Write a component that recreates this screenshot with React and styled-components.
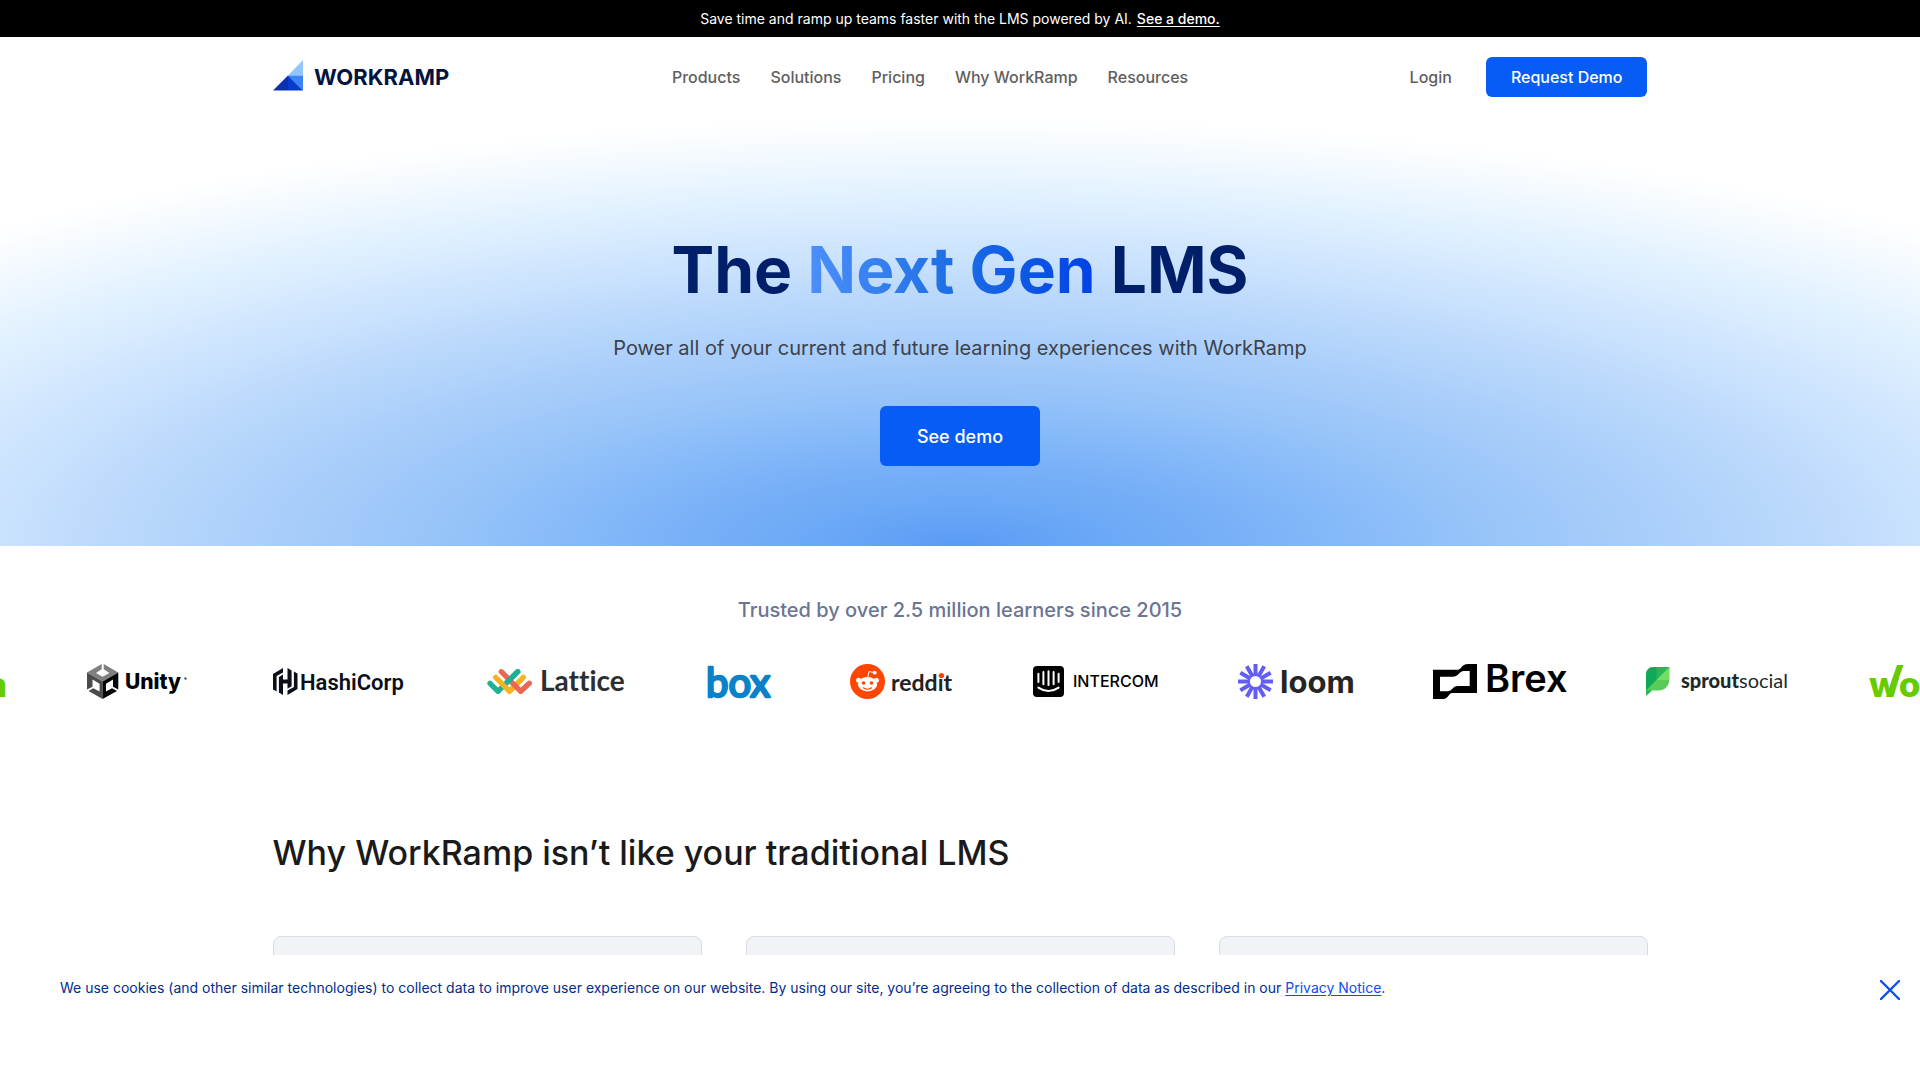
import React from "react";
import styled, { createGlobalStyle } from "styled-components";

const GlobalStyle = createGlobalStyle`
  *, *::before, *::after { box-sizing: border-box; }
  body {
    margin: 0;
    background: #fff;
    color: #1a1a1a;
    font-family: Inter, "Liberation Sans", sans-serif;
  }
  h1, h2, p { margin: 0; }
`;

const Announcement = styled.div`
  display: flex;
  justify-content: center;
  gap: 5px;
  padding: 8px 20px;
  background: #000;
  color: #fff;
  font-size: 14px;
  line-height: 21px;
`;

const AnnouncementLink = styled.a`
  color: #fff;
  font-weight: 500;
  text-underline-offset: 2px;
`;

const Container = styled.div`
  width: 100%;
  max-width: 1415px;
  margin: 0 auto;
  padding: 0 20px;
`;

const HeaderRow = styled(Container)`
  display: flex;
  align-items: center;
  justify-content: space-between;
  padding-top: 20px;
  padding-bottom: 20px;
`;

const HomeLink = styled.a`
  display: flex;
`;

const Nav = styled.nav`
  display: flex;
  gap: 30px;
`;

const NavLink = styled.a`
  color: #5e5e5e;
  font-size: 16px;
  font-weight: 500;
  line-height: 24px;
  text-decoration: none;
`;

const Actions = styled.div`
  display: flex;
  align-items: center;
  gap: 34px;
`;

const Button = styled.button`
  height: ${(p) => (p.$large ? 60 : 40)}px;
  padding: 0 ${(p) => (p.$large ? 37 : 25)}px;
  border: 0;
  border-radius: 6px;
  background: #075cf5;
  color: #fff;
  font-family: inherit;
  font-size: ${(p) => (p.$large ? 18 : 16)}px;
  font-weight: 500;
  cursor: pointer;
`;

const Hero = styled.section`
  display: flex;
  flex-direction: column;
  align-items: center;
  padding: 114px 20px 80px;
  background: radial-gradient(
    75% 100% at 50% 100%,
    #5a9bf5 0%,
    #6ba8f6 10%,
    #7ab1f8 20%,
    #93c2f9 34%,
    #aacefa 48%,
    #bddafc 60%,
    #c8e1fd 66%,
    #d0e6fe 71%,
    #daecff 77%,
    #e5f3ff 84%,
    #f5faff 93%,
    #fff 100%
  );
  text-align: center;
`;

const HeroTitle = styled.h1`
  color: #001f6b;
  font-size: 64px;
  font-weight: 700;
  line-height: 77px;
`;

const Accent = styled.span`
  background: linear-gradient(90deg, #4d8ffa 0%, #1d6fe5 50%, #0041e6 100%);
  background-clip: text;
  -webkit-background-clip: text;
  color: transparent;
`;

const HeroText = styled.p`
  margin: 25px 0 43px;
  color: #3b424c;
  font-size: 20px;
  line-height: 30px;
`;

const Trusted = styled.section`
  padding: 49px 0 40px;
  overflow: hidden;
`;

const TrustedTitle = styled.p`
  color: #6b7594;
  font-size: 20px;
  font-weight: 500;
  line-height: 30px;
  text-align: center;
`;

const LogoTrack = styled.div`
  display: flex;
  gap: 80px;
  width: max-content;
  margin-top: 39px;
  transform: translateX(-133px);
`;

const Logo = styled.svg`
  display: block;
  flex: none;
  overflow: visible;
`;

const PlainText = styled.text`
  font-variant-ligatures: none;
`;

const Why = styled(Container).attrs({ as: "section" })`
  padding-top: 88px;
`;

const WhyTitle = styled.h2`
  font-size: 34px;
  font-weight: 500;
  line-height: 50px;
`;

const CardGrid = styled.div`
  display: grid;
  grid-template-columns: repeat(3, 1fr);
  gap: 44px;
  margin-top: 58px;
`;

const Card = styled.article`
  min-height: 120px;
  border: 1px solid #d8dce4;
  border-radius: 8px;
  background: #f2f3f7;
`;

const CookieBar = styled.aside`
  position: fixed;
  inset: auto 0 0;
  display: flex;
  align-items: flex-start;
  justify-content: space-between;
  min-height: 125px;
  padding: 22px 20px 22px 60px;
  background: #fff;
  color: #002d8f;
  font-size: 14px;
  line-height: 21px;
`;

const CookieLink = styled.a`
  color: #0b4df0;
  text-underline-offset: 2px;
`;

const CloseButton = styled.button`
  display: flex;
  margin-top: 3px;
  padding: 0;
  border: 0;
  background: none;
  cursor: pointer;
`;

const sans = 'Inter, "Liberation Sans", sans-serif';
const lato = 'Lato, "Liberation Sans", sans-serif';
const roboto = 'Roboto, "Liberation Sans", sans-serif';

function WorkRampLogo() {
  return (
    <Logo width="178" height="34" viewBox="0 0 178 34" role="img" aria-label="WorkRamp">
      <path d="M30 0V15.5H15z" fill="#94c4fc" />
      <path d="M15 15.5H30V30.5z" fill="#3d83f5" />
      <path d="M15 15.5L30 30.5H15z" fill="#0a3bd0" />
      <path d="M15 15.5V30.5H0z" fill="#0a2fb0" />
      <text x="41" y="25" fill="#04143f" fontFamily={sans} fontSize="22" fontWeight="700">WORKRAMP</text>
    </Logo>
  );
}

function Unity() {
  return (
    <Logo width="106" height="36" viewBox="0 0 106 36" role="img" aria-label="Unity">
      <path fill="#808080" d="M14.7 0L0 8.500L15.600 17.500L31.300 8.500L16.700 0V5.300L22.500 9L15.600 12.800L9 9L14.700 5.300z" />
      <path fill="#4a4a4a" d="M0 8.500L15.600 17.500V35L1.500 27L6.300 24.300L12.600 27.600V19.700L5.500 15.600V22.700L0 25.500z" />
      <path fill="#050505" d="M31.300 8.500L15.600 17.500V35L30 27L25 24.300L19 27.600V19.700L26 15.600V22.700L31.300 25.500z" />
      <text x="38" y="25" fontFamily={sans} fontSize="21" fontWeight="800">Unity</text>
      <circle cx="98.500" cy="14.500" r="1.200" fill="#555" />
    </Logo>
  );
}

function HashiCorp() {
  return (
    <Logo width="134" height="36" viewBox="0 0 134 36" fill="#0b0f19" role="img" aria-label="HashiCorp">
      <path d="M10 4L0 9.900V25.500L3.600 27.600V12.100L10 8.400z" />
      <path d="M5.900 12.900L10 10.500V15.600H14.500V4L18.600 6.400V22.300L14.500 24.700V19.400H10V31L5.900 28.600z" />
      <path d="M14.500 31L24.500 25.100V9.500L20.900 7.400V22.900L14.500 26.600z" />
      <text x="27" y="26" fontFamily={roboto} fontSize="22" fontWeight="600">HashiCorp</text>
    </Logo>
  );
}

function Lattice() {
  return (
    <Logo width="140" height="36" viewBox="0 0 140 36" role="img" aria-label="Lattice">
      <g fill="none" strokeWidth="5.300" strokeLinecap="round" strokeLinejoin="round">
        <path stroke="#1fb095" d="M30.700 7.700L11 27.300L3 19.300" />
        <path stroke="#f5b324" d="M36.300 13.300L22.500 27.300L8.700 13.300" />
        <path stroke="#ea6753" d="M42.300 19.300L33.700 27.300L14.300 7.700" />
        <path stroke="#1fb095" d="M30.700 7.700L20.500 17.900" />
      </g>
      <PlainText x="53" y="27" fill="#2c2f30" fontFamily={lato} fontSize="28" fontWeight="700">Lattice</PlainText>
    </Logo>
  );
}

function Box() {
  return (
    <Logo width="63" height="36" viewBox="0 0 63 36" role="img" aria-label="Box">
      <text x="-1" y="33" fill="#0a82c9" stroke="#0a82c9" strokeWidth="2.500" strokeLinejoin="round" fontFamily={lato} fontSize="40" fontWeight="400">box</text>
    </Logo>
  );
}

function Reddit() {
  return (
    <Logo width="103" height="36" viewBox="0 0 103 36" role="img" aria-label="Reddit">
      <circle cx="17.500" cy="17.500" r="17.500" fill="#ff4500" />
      <g fill="#fff">
        <ellipse cx="17.500" cy="20.200" rx="9.600" ry="7.300" />
        <circle cx="8.600" cy="16.300" r="2.500" />
        <circle cx="26.400" cy="16.300" r="2.500" />
        <circle cx="24.700" cy="8.700" r="1.900" />
      </g>
      <path d="M17.800 13L19 7.500L24 8.600" fill="none" stroke="#fff" strokeWidth="1" />
      <circle cx="13.500" cy="19" r="1.800" fill="#ff4500" />
      <circle cx="21.500" cy="19" r="1.800" fill="#ff4500" />
      <path d="M13.300 23.800Q17.500 26.700 21.700 23.800" fill="none" stroke="#ff4500" strokeWidth="1.100" strokeLinecap="round" />
      <text x="41" y="27" fill="#222" fontFamily={lato} fontSize="23" fontWeight="700">reddit</text>
      <circle cx="91.500" cy="11.500" r="2.600" fill="#ff4500" />
    </Logo>
  );
}

function Intercom() {
  return (
    <Logo width="125" height="36" viewBox="0 0 125 36" role="img" aria-label="Intercom">
      <rect y="2" width="31" height="31" rx="4" />
      <g fill="none" stroke="#fff" strokeWidth="2" strokeLinecap="round">
        <path d="M5.400 9.700V18M10.400 8V20.300M15.500 7.300V21M20.600 8V20.300M25.600 9.700V18" />
        <path d="M5.400 23.600Q15.500 30.500 25.600 23.600" />
      </g>
      <text x="40" y="23" fontFamily={sans} fontSize="16" fontWeight="500">INTERCOM</text>
    </Logo>
  );
}

const rays = Array.from({ length: 12 }, (_, i) => i * 30);

function Loom() {
  return (
    <Logo width="115" height="36" viewBox="0 0 115 36" role="img" aria-label="Loom">
      <g fill="#625df5">
        {rays.map((angle) => (
          <rect key={angle} x="15.500" y="0" width="4" height="12" transform={`rotate(${angle} 17.500 17.500)`} />
        ))}
      </g>
      <circle cx="17.500" cy="17.500" r="6.800" fill="#fff" stroke="#625df5" strokeWidth="2.400" />
      <text x="42" y="29" fill="#252525" fontFamily={sans} fontSize="31" fontWeight="700">loom</text>
    </Logo>
  );
}

function Brex() {
  return (
    <Logo width="133" height="36" viewBox="0 0 133 36" role="img" aria-label="Brex">
      <path
        fillRule="evenodd"
        d="M0 5.700H24.500C29 5.700 28 0 35 0H44V29H19.500C15 29 16 35 10 35H0zM7 12.700V27.300H14C20 27.300 19 22 25 22H36.700V7H31C26 7 26 12.700 19.500 12.700z"
      />
      <text x="52" y="28" fontFamily={sans} fontSize="38" fontWeight="600">Brex</text>
    </Logo>
  );
}

function SproutSocial() {
  return (
    <Logo width="142" height="36" viewBox="0 0 142 36" role="img" aria-label="Sprout Social">
      <path d="M8 3H23.300V15C23.300 22 19 26.500 12 26.500H6L0 31.700V11C0 6 3 3 8 3z" fill="#59cb59" />
      <path d="M8 3H23.300L0 26.500V11C0 6 3 3 8 3z" fill="#0fa958" />
      <path d="M10.500 3H23.300L10.500 16z" fill="#2bb656" />
      <path d="M23.300 3V16H10.500z" fill="#75dd66" />
      <path d="M0 31.700V26.500H6z" fill="#2bb656" />
      <text x="35" y="24" fill="#1c2b2a" fontFamily={lato} fontSize="20">
        <tspan fontWeight="900">sprout</tspan>
        <tspan fontWeight="400">social</tspan>
      </text>
    </Logo>
  );
}

function Workiva() {
  return (
    <Logo width="140" height="36" viewBox="0 0 140 36" fill="#66cc00" role="img" aria-label="Workiva">
      <path d="M18 33L29 1H35.500L24 33z" />
      <text x="1" y="33" fontFamily={sans} fontSize="35" fontWeight="800">workiva</text>
    </Logo>
  );
}

const navItems = ["Products", "Solutions", "Pricing", "Why WorkRamp", "Resources"];
const customerLogos = [Workiva, Unity, HashiCorp, Lattice, Box, Reddit, Intercom, Loom, Brex, SproutSocial, Workiva];

export default function App() {
  return (
    <>
      <GlobalStyle />
      <Announcement>
        <span>Save time and ramp up teams faster with the LMS powered by AI.</span>
        <AnnouncementLink href="#demo">See a demo.</AnnouncementLink>
      </Announcement>
      <header>
        <HeaderRow>
          <HomeLink href="#home"><WorkRampLogo /></HomeLink>
          <Nav>
            {navItems.map((item) => (
              <NavLink key={item} href="#menu">{item}</NavLink>
            ))}
          </Nav>
          <Actions>
            <NavLink href="#login">Login</NavLink>
            <Button type="button">Request Demo</Button>
          </Actions>
        </HeaderRow>
      </header>
      <main>
        <Hero>
          <HeroTitle>The <Accent>Next Gen</Accent> LMS</HeroTitle>
          <HeroText>Power all of your current and future learning experiences with WorkRamp</HeroText>
          <Button type="button" $large>See demo</Button>
        </Hero>
        <Trusted>
          <TrustedTitle>Trusted by over 2.5 million learners since 2015</TrustedTitle>
          <LogoTrack>
            {customerLogos.map((CustomerLogo, i) => (
              <CustomerLogo key={i} />
            ))}
          </LogoTrack>
        </Trusted>
        <Why>
          <WhyTitle>Why WorkRamp isn’t like your traditional LMS</WhyTitle>
          <CardGrid>
            <Card />
            <Card />
            <Card />
          </CardGrid>
        </Why>
      </main>
      <CookieBar aria-label="Cookie notice">
        <p>
          We use cookies (and other similar technologies) to collect data to improve user experience on our website. By using our site, you’re agreeing to the collection of data as described in our{" "}
          <CookieLink href="#privacy">Privacy Notice</CookieLink>.
        </p>
        <CloseButton type="button" aria-label="Close">
          <svg width="20" height="20" viewBox="0 0 20 20" fill="none" stroke="#0b4df0" strokeWidth="2.400" strokeLinecap="round">
            <path d="M1 1L19 19M19 1L1 19" />
          </svg>
        </CloseButton>
      </CookieBar>
    </>
  );
}
